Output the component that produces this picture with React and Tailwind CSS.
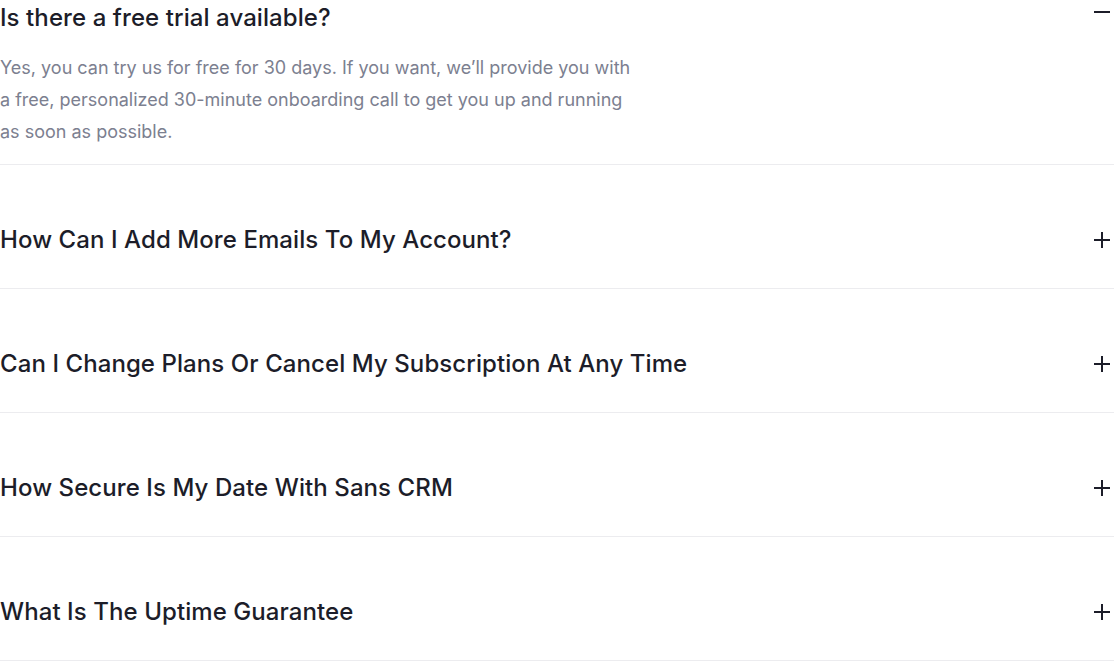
import React from "react";

const items = [
  "How Can I Add More Emails To My Account?",
  "Can I Change Plans Or Cancel My Subscription At Any Time",
  "How Secure Is My Date With Sans CRM",
  "What Is The Uptime Guarantee",
];

function Plus() {
  return (
    <svg width="18" height="18" viewBox="0 0 18 18" fill="none" stroke="#1c1d29" strokeWidth="2">
      <path d="M9 1v16M1 9h16" />
    </svg>
  );
}

export default function App() {
  return (
    <div className="w-[1114px] bg-white font-['Inter',sans-serif] text-[#1c1d29]">
      <div className="border-b border-[#ececef] pt-[2px] pb-[16px]">
        <div className="flex items-start justify-between">
          <h3 className="text-[24px] leading-[32px] font-medium tracking-[0.08px]">Is there a free trial available?</h3>
          <svg width="18" height="18" viewBox="0 0 18 18" fill="none" stroke="#1c1d29" strokeWidth="2" className="mr-[3px]">
            <path d="M1 10h16" />
          </svg>
        </div>
        <p className="mt-[18px] w-[640px] text-[18px] leading-[32px] text-[#7c8090]">
          Yes, you can try us for free for 30 days. If you want, we’ll provide you with a free, personalized 30-minute onboarding call to get you up and running as soon as possible.
        </p>
      </div>
      {items.map((q) => (
        <div key={q} className="border-b border-[#ececef] pt-[59px] pb-[32px] flex items-center justify-between">
          <h3 className="text-[24px] leading-[32px] font-medium tracking-[0.08px]">{q}</h3>
          <span className="mr-[3px]"><Plus /></span>
        </div>
      ))}
    </div>
  );
}
